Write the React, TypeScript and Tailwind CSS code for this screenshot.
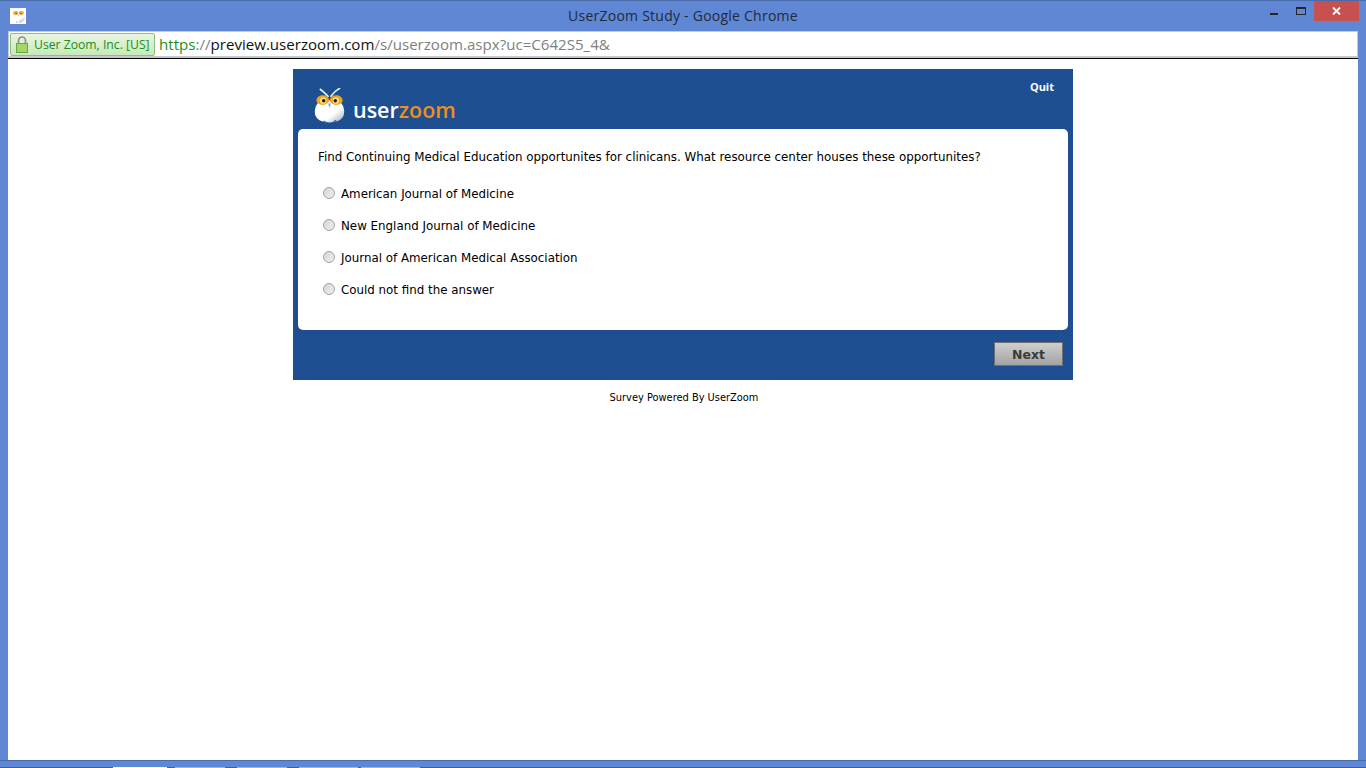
import React from 'react';

const OPTIONS = [
  'American Journal of Medicine',
  'New England Journal of Medicine',
  'Journal of American Medical Association',
  'Could not find the answer',
];

const Owl = ({ size, id }: { size: number; id: string }) => (
  <svg width={size} height={size * 1.16} viewBox="0 0 32 37" className="block shrink-0">
    <defs>
      <linearGradient id={id} x1="0" y1="0" x2="1" y2="1">
        <stop offset="0" stopColor="#ffffff" />
        <stop offset="0.62" stopColor="#ffffff" />
        <stop offset="1" stopColor="#9aa8bc" />
      </linearGradient>
    </defs>
    <path d="M6 1 C9 3 12 6 15 9 M27 0 C23 2 20 5 17 9" stroke="#eef2f8" strokeWidth="1.7" fill="none" />
    <path d="M6 14 C1 17 -1 26 3 31 C8 37 24 37 29 31 C33 26 31 17 26 14 C21 12 11 12 6 14 Z" fill={`url(#${id})`} />
    <ellipse cx="9" cy="12.5" rx="6.5" ry="5" fill="#f0a51c" />
    <ellipse cx="23" cy="12.5" rx="6.5" ry="5" fill="#f0a51c" />
    <circle cx="9.5" cy="13" r="3.2" fill="#f9e28a" />
    <circle cx="22.5" cy="13" r="3.2" fill="#f9e28a" />
    <circle cx="10" cy="13" r="1.8" fill="#222" />
    <circle cx="22" cy="13" r="1.8" fill="#222" />
    <path d="M14.5 16 L17.5 16 L16 21 Z" fill="#8fb0d8" />
    <path d="M10 34 l3 2 M20 35 l3 -1.5" stroke="#3f6fb0" strokeWidth="1.5" />
  </svg>
);

const Stripes = 'bg-[#1d4f92] bg-[repeating-linear-gradient(135deg,#1b4b8c_0px,#1b4b8c_1.414px,#205396_1.414px,#205396_2.828px)]';

const App = () => {
  return (
    <div className="w-[1366px] h-[768px] overflow-hidden flex flex-col bg-[#5f87d3] border-t border-[#4a6ca8] font-['Liberation_Sans',sans-serif]">
      {/* window title */}
      <div className="h-[30px] shrink-0 flex items-start justify-between relative">
        <div className="ml-[10px] mt-[7px] w-4 h-4 bg-white flex items-center justify-center">
          <Owl size={13} id="owlSmall" />
        </div>
        <div className="absolute inset-x-0 top-0 text-center text-[14px] tracking-[0.24px] leading-[30px] text-[#1f2a3d] font-['Open_Sans',sans-serif]">
          UserZoom Study - Google Chrome
        </div>
        <div className="flex items-start mr-[7px]">
          <div className="w-[8px] h-[2px] bg-[#262626] mt-[12px] mr-[18px]" />
          <div className="w-[10px] h-[8px] border border-[#262626] border-t-2 mt-[6px] mr-[8px]" />
          <div className="w-[45px] h-[20px] bg-[#c75050] flex items-center justify-center text-white">
            <svg width="9" height="8" viewBox="0 0 9 8">
              <path d="M1 0.5 L8 7.5 M8 0.5 L1 7.5" stroke="#fff" strokeWidth="1.8" />
            </svg>
          </div>
        </div>
      </div>

      {/* chrome + page */}
      <div className="flex-1 mx-[8px] flex flex-col min-h-0">
        <div className="h-[27px] shrink-0 bg-white border border-[#c4c8cf] border-b-2 flex items-center pl-[1px]">
          <div className="h-[23px] w-[145px] rounded-[2px] border border-[#8fbf78] bg-gradient-to-b from-[#e9f6e2] to-[#c9e8ba] flex items-center text-[12.2px] text-[#17901c] font-['Open_Sans',sans-serif]">
            <svg width="14" height="17" viewBox="0 0 14 17" className="ml-[4px] mr-[5px] shrink-0">
              <path d="M3.5 8 V4.5 a3.5 3.5 0 0 1 7 0 V8" stroke="#8c928c" strokeWidth="1.7" fill="none" />
              <rect x="1.5" y="7.5" width="11" height="9" fill="#a5d66a" stroke="#6fa347" />
            </svg>
            <span className="whitespace-nowrap pt-[2px]">User Zoom, Inc. [US]</span>
          </div>
          <div className="ml-[4px] text-[15.1px] whitespace-nowrap font-['Open_Sans',sans-serif] text-[#808080]">
            <span className="text-[#17901c]">https</span>
            <span>://</span>
            <span className="text-[#111]">preview.userzoom.com</span>
            <span>/s/userzoom.aspx?uc=C642S5_4&amp;</span>
          </div>
        </div>
        <div className="h-px shrink-0 bg-black" />

        <div className="flex-1 bg-white min-h-0 font-['DejaVu_Sans',sans-serif] pt-[10px]">
          <div className={`w-[780px] ml-[285px] ${Stripes}`}>
            <div className="h-[60px] relative flex items-end pl-[21px] pb-[5px]">
              <Owl size={31} id="owlLogo" />
              <div className="ml-[8px] mb-[-1px] text-[21.5px] leading-[30px] font-semibold font-['Open_Sans',sans-serif]">
                <span className="text-white">user</span>
                <span className="text-[#ed8f1c]">zoom</span>
              </div>
              <span className="absolute right-[19px] top-[11px] text-[11px] leading-[13px] font-bold text-white font-['Open_Sans',sans-serif]">Quit</span>
            </div>

            <div className="mx-[5px] h-[201px] bg-white rounded-[5px] pt-[20px] pl-[20px]">
              <p className="text-[11.86px] leading-[16px] text-black whitespace-nowrap">
                Find Continuing Medical Education opportunites for clinicans. What resource center houses these opportunites?
              </p>
              <div className="mt-[19px] flex flex-col gap-[14px]">
                {OPTIONS.map((opt) => (
                  <div key={opt} className="flex items-center h-[18px] text-[11.85px] text-black">
                    <span className="ml-[5px] w-[12px] h-[12px] mr-[1px] rounded-full border border-[#a3a3a3] bg-gradient-to-br from-[#d4d4d4] to-[#f0f0f0]" />
                    <span className="ml-[5px] pt-[4px] whitespace-nowrap">{opt}</span>
                  </div>
                ))}
              </div>
            </div>

            <div className="h-[50px] flex justify-end pt-[12px] pr-[10px]">
              <button className="w-[69px] h-[24px] pt-[2px] border border-[#6f6f6f] bg-gradient-to-b from-[#cfcfcf] to-[#a3a3a3] text-[12.5px] font-bold text-[#3a3a3a] font-['DejaVu_Sans',sans-serif]">
                Next
              </button>
            </div>
          </div>
          <div className="w-[780px] ml-[286px] mt-[11px] text-center text-[9.85px] leading-[14px] text-black">
            Survey Powered By UserZoom
          </div>
        </div>
      </div>

      {/* bottom frame */}
      <div className="h-[7px] shrink-0 border-t border-[#4a6ca8] bg-[#5f87d3]" />
      <div className="h-px shrink-0 bg-[#3f5f96] relative">
        <div className="absolute left-[113px] top-0 w-[54px] h-px bg-white" />
        <div className="absolute left-[175px] top-0 w-[50px] h-px bg-[#a8b2c4]" />
        <div className="absolute left-[237px] top-0 w-[50px] h-px bg-[#a8b2c4]" />
        <div className="absolute left-[299px] top-0 w-[59px] h-px bg-[#a8b2c4]" />
        <div className="absolute left-[361px] top-0 w-[59px] h-px bg-[#a8b2c4]" />
      </div>
    </div>
  );
};

export default App;
